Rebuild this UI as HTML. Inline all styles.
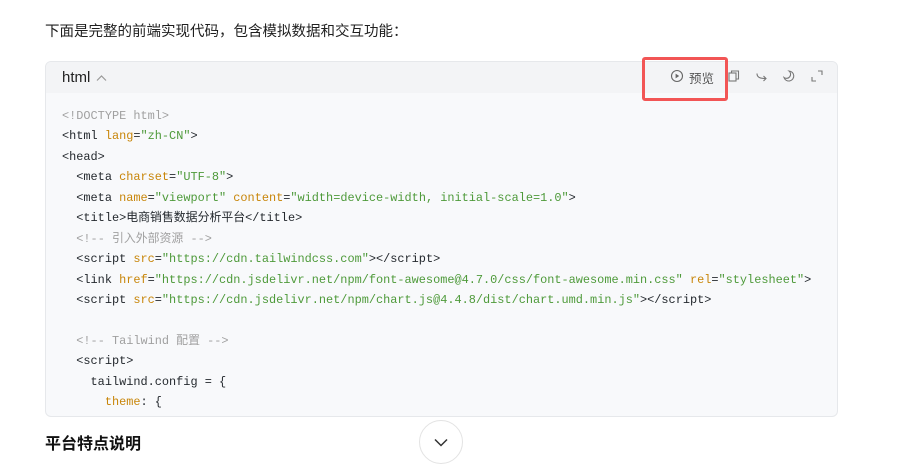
<!DOCTYPE html>
<html><head><meta charset="utf-8"><style>
body{margin:0;width:905px;height:451px;background:#fff;overflow:hidden;font-family:"Liberation Sans","Noto Sans CJK SC",sans-serif;position:relative}
.intro{position:absolute;left:45px;top:20px;font-size:14.5px;color:#1f1f1f}
.box{position:absolute;left:45px;top:61px;width:791px;height:354px;border:1px solid #e6e8eb;border-radius:6px;background:#f8f9fb;overflow:hidden}
.hd{height:31px;background:#f3f4f6;position:relative}
.hd .l{position:absolute;left:16px;top:7px;font-size:15px;color:#222}
.code{position:absolute;left:16px;top:44px;font-family:"Liberation Mono","Noto Sans CJK SC",monospace;font-size:11.9px;line-height:20.45px;color:#24292e;white-space:pre}
.a{color:#c8860a}.s{color:#4e9a3a}.c{color:#a0a0a0}
.red{position:absolute;left:642px;top:57px;width:80px;height:38px;border:3px solid #f25555;border-radius:3px}
.h2{position:absolute;left:45px;top:430px;font-size:16px;font-weight:bold;color:#111}
.circ{position:absolute;left:419px;top:420px;width:42px;height:42px;border:1px solid #e3e3e3;border-radius:50%;background:#fff}
.ic{position:absolute;top:69px}
</style></head><body>
<div class="intro">下面是完整的前端实现代码，包含模拟数据和交互功能：</div>
<div class="box">
<div class="hd"><span class="l">html <svg width="11" height="8" viewBox="0 0 11 8" style="margin-left:1px"><path d="M1 6.5L5.5 2L10 6.5" fill="none" stroke="#999" stroke-width="1.2"/></svg></span></div>
<div class="code"><span class="c">&lt;!DOCTYPE html&gt;</span>
&lt;html <span class="a">lang</span>=<span class="s">"zh-CN"</span>&gt;
&lt;head&gt;
  &lt;meta <span class="a">charset</span>=<span class="s">"UTF-8"</span>&gt;
  &lt;meta <span class="a">name</span>=<span class="s">"viewport"</span> <span class="a">content</span>=<span class="s">"width=device-width, initial-scale=1.0"</span>&gt;
  &lt;title&gt;电商销售数据分析平台&lt;/title&gt;
  <span class="c">&lt;!-- 引入外部资源 --&gt;</span>
  &lt;script <span class="a">src</span>=<span class="s">"https://cdn.tailwindcss.com"</span>&gt;&lt;/script&gt;
  &lt;link <span class="a">href</span>=<span class="s">"https://cdn.jsdelivr.net/npm/font-awesome@4.7.0/css/font-awesome.min.css"</span> <span class="a">rel</span>=<span class="s">"stylesheet"</span>&gt;
  &lt;script <span class="a">src</span>=<span class="s">"https://cdn.jsdelivr.net/npm/chart.js@4.4.8/dist/chart.umd.min.js"</span>&gt;&lt;/script&gt;

  <span class="c">&lt;!-- Tailwind 配置 --&gt;</span>
  &lt;script&gt;
    tailwind.config = {
      <span class="a">theme</span>: {</div>
</div>
<svg class="ic" style="left:670px" width="14" height="14" viewBox="0 0 14 14"><circle cx="7" cy="7" r="5.5" fill="none" stroke="#666" stroke-width="1.1"/><path d="M5.6 4.6v4.8L9.2 7z" fill="#666"/></svg>
<span style="position:absolute;left:689px;top:68px;font-size:12.5px;color:#555">预览</span>
<svg class="ic" style="left:727px" width="14" height="14" viewBox="0 0 14 14"><rect x="2" y="4" width="7" height="8" fill="none" stroke="#777" stroke-width="1.1"/><path d="M4.5 4V2h7v8H9" fill="none" stroke="#777" stroke-width="1.1"/></svg>
<svg class="ic" style="left:755px" width="14" height="14" viewBox="0 0 14 14"><path d="M2 4.5c0 4 3 5 9 5M8.5 7l2.5 2.5L8.5 12" fill="none" stroke="#777" stroke-width="1.1"/></svg>
<svg class="ic" style="left:782px" width="14" height="14" viewBox="0 0 14 14"><path d="M7 2a5 5 0 1 1-5 6.5A4 4 0 0 0 7 2z" fill="none" stroke="#777" stroke-width="1.1"/></svg>
<svg class="ic" style="left:810px" width="14" height="14" viewBox="0 0 14 14"><path d="M2 8v4h4M8 2h4v4" fill="none" stroke="#777" stroke-width="1.1"/></svg>
<div class="red"></div>
<div class="h2">平台特点说明</div>
<div class="circ"><svg width="42" height="42" viewBox="0 0 42 42"><path d="M15 18.5l6 6 6-6" fill="none" stroke="#333" stroke-width="1.5"/></svg></div>
</body></html>
